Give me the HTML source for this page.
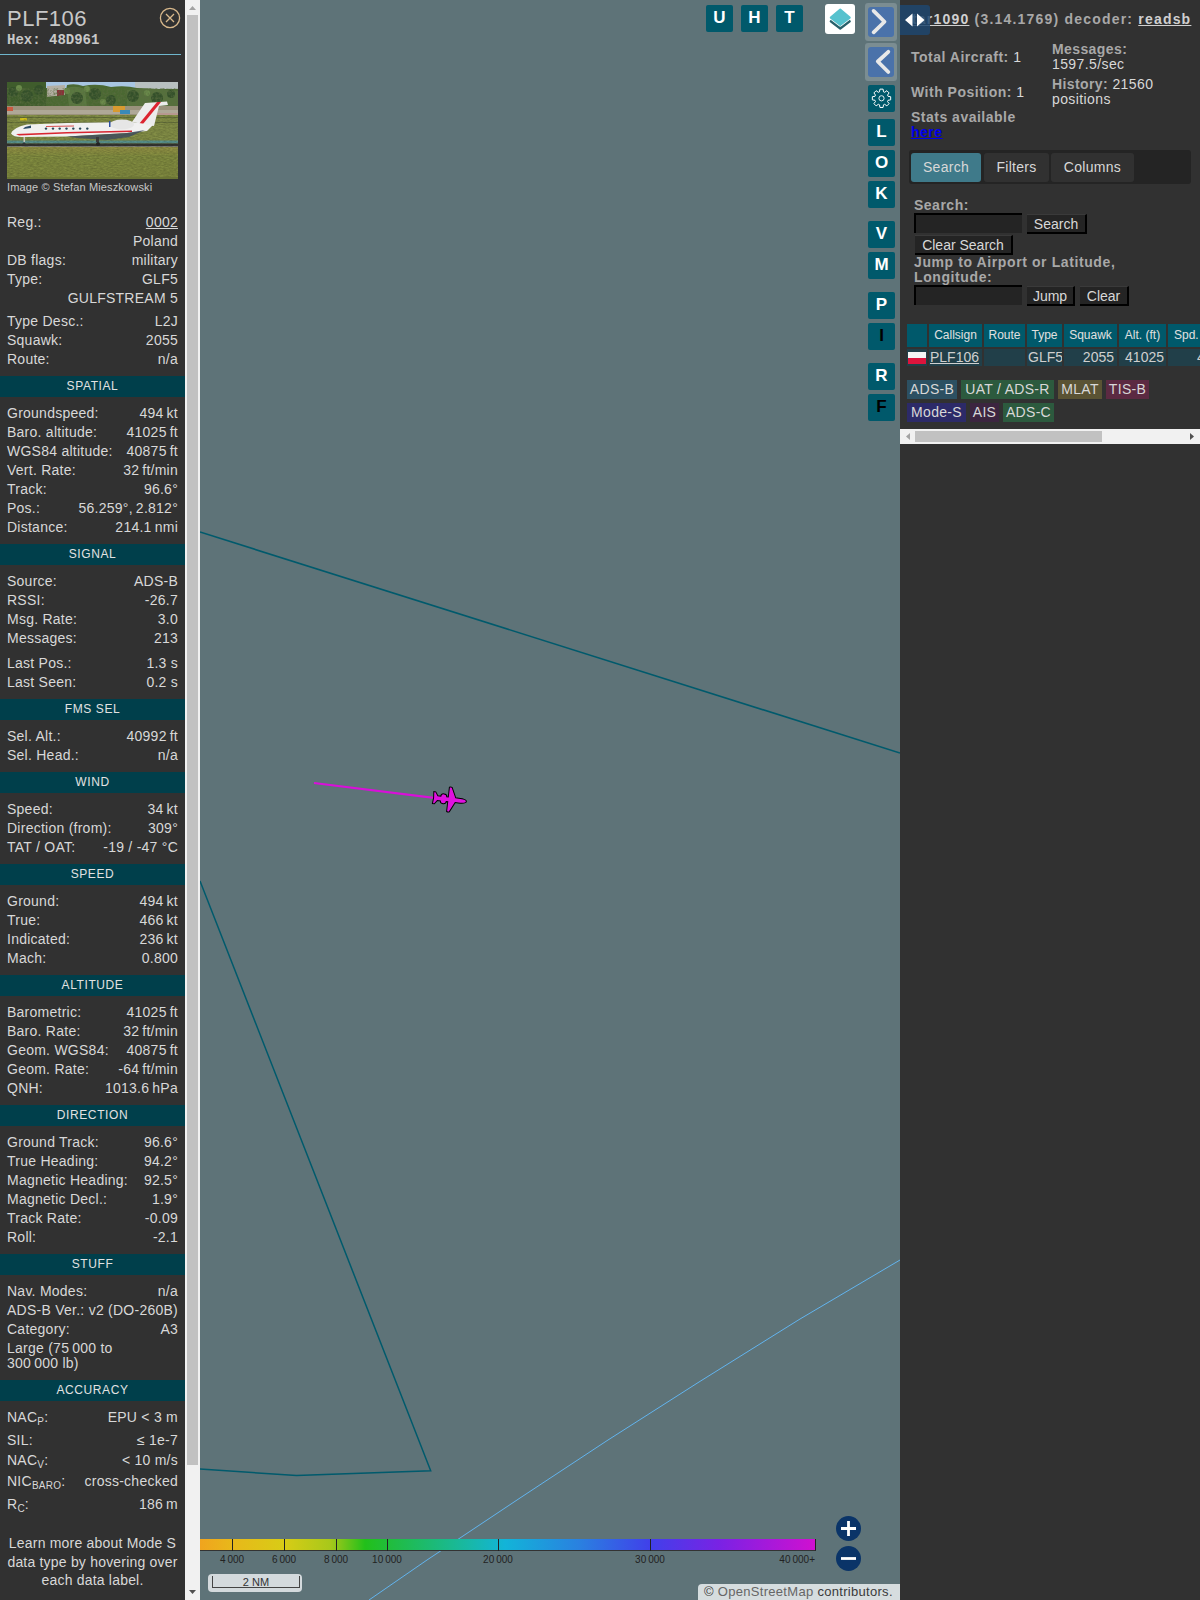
<!DOCTYPE html>
<html><head><meta charset="utf-8"><style>
html,body{margin:0;padding:0;width:1200px;height:1600px;overflow:hidden;background:#313131;font-family:"Liberation Sans", sans-serif;}
.abs{position:absolute}
#side{position:absolute;left:0;top:0;width:185px;height:1600px;background:#313131;color:#d8d8d8;overflow:hidden}
.r{position:absolute;left:7px;width:171px;height:17px;line-height:17px;font-size:14px;white-space:nowrap;letter-spacing:0.25px}
.r .l{position:absolute;left:0}
.r .v{position:absolute;right:0}
.r sub{font-size:10px;vertical-align:-3px;line-height:0}
.h{position:absolute;left:0;width:185px;height:21px;line-height:21px;background:#003f4b;color:#e2e2e2;text-align:center;font-size:12px;letter-spacing:0.6px}
.lm{position:absolute;left:0;width:185px;text-align:center;font-size:14px;letter-spacing:0.2px;height:17px;line-height:17px;white-space:nowrap}
#sbar{position:absolute;left:185px;top:0;width:15px;height:1600px;background:#f1f1f1}
#map{position:absolute;left:200px;top:0;width:700px;height:1600px;background:#5e7378;overflow:hidden}
.tick{position:absolute;top:1539px;width:1px;height:12px;background:#222}
.lab{position:absolute;top:1553.5px;width:60px;text-align:center;font-size:10px;line-height:12px;color:#222;white-space:nowrap}
.zb{position:absolute;width:25px;height:25px;border-radius:50%;background:#0a3468}
.mb{position:absolute;width:27px;height:27px;background:#00596b;border-radius:2px;color:#fff;font-weight:bold;font-size:17px;line-height:26px;text-align:center}
.rt{position:absolute;font-size:14px;line-height:17px;white-space:nowrap;color:#a8a8a8}
.rt .w{color:#d8d8d8}
.tab{position:absolute;top:153px;height:29px;line-height:29px;text-align:center;background:#313131;color:#d8d8d8;font-size:14px;border-radius:3px;letter-spacing:0.3px}
.inp{position:absolute;width:108px;height:20px;background:#242424;border-top:2px solid #000;border-left:2px solid #000;box-sizing:border-box}
.btn{position:absolute;height:20px;line-height:18px;background:#242424;color:#d8d8d8;font-size:14px;text-align:center;border-right:2px solid #000;border-bottom:2px solid #000;border-top:1px solid #3a3a3a;box-sizing:border-box;white-space:nowrap}
.th{position:absolute;top:324px;height:23px;line-height:23px;background:#00596b;color:#e0e0e0;font-size:12px;text-align:center;white-space:nowrap;overflow:hidden}
.td{position:absolute;top:349px;height:17px;line-height:17px;background:#213f49;color:#cfcfcf;font-size:14px;white-space:nowrap;overflow:hidden}
.src{position:absolute;height:19px;line-height:19px;text-align:center;color:#d8d8d8;font-size:14px;white-space:nowrap;letter-spacing:0.3px}
#right{position:absolute;left:900px;top:0;width:300px;height:1600px;background:#313131;color:#a8a8a8}
</style></head><body>
<div id="side">
<div class="abs" style="left:7px;top:5px;font-size:22px;letter-spacing:0.5px;color:#c8c8c8;line-height:28px">PLF106</div>
<div class="abs" style="left:7px;top:32px;font-size:14px;font-family:'Liberation Mono', monospace;font-weight:bold;color:#c8c8c8;line-height:16px">Hex: 48D961</div>
<svg class="abs" style="left:159px;top:7px" width="22" height="22" viewBox="0 0 22 22"><circle cx="11" cy="11" r="9.6" fill="none" stroke="#d9b98c" stroke-width="1.3"/><path d="M7 7L15 15M15 7L7 15" stroke="#d9b98c" stroke-width="1.3"/></svg>
<div class="abs" style="left:0;top:54px;width:181px;height:1px;background:#6fb6cc"></div>
<svg class="abs" style="left:7px;top:82px" width="171" height="97" viewBox="0 0 171 97">
<defs>
<linearGradient id="gr" x1="0" y1="0" x2="0" y2="1"><stop offset="0" stop-color="#a09e4a"/><stop offset="0.3" stop-color="#8c9845"/><stop offset="1" stop-color="#8a9444"/></linearGradient>
<filter id="tx" x="0" y="0" width="1" height="1"><feTurbulence type="fractalNoise" baseFrequency="0.3 0.9" numOctaves="2" seed="3"/><feColorMatrix values="0 0 0 0 0  0 0 0 0 0  0 0 0 0 0  0 0 0 0.3 0"/><feComposite in2="SourceGraphic" operator="in"/></filter>
<filter id="tr" x="0" y="0" width="1" height="1"><feTurbulence type="fractalNoise" baseFrequency="0.45" numOctaves="2" seed="7"/><feColorMatrix values="0 0 0 0 0.1  0 0 0 0 0.15  0 0 0 0 0.05  0 0 0 1.6 -0.6"/><feComposite in2="SourceGraphic" operator="in"/></filter>
</defs>
<rect width="171" height="97" fill="#8d9444"/>
<rect x="0" y="0" width="171" height="27" fill="#4a6632"/>
<rect x="39" y="0" width="132" height="6" fill="#a8c6e2"/>
<rect x="128" y="0" width="43" height="7" fill="#b8c0c0"/>
<path d="M0,0 L39,0 L39,27 L0,27Z" fill="#3f5c2c"/>
<path d="M40,4 L58,3 L58,14 L40,15Z" fill="#b4b0a4"/>
<rect x="50" y="8" width="7" height="7" fill="#8a3038"/>
<path d="M40,15 L58,13 L60,3 Q68,1 76,4 Q90,1 104,5 Q118,3 130,6 L171,8 L171,27 L40,27Z" fill="#4a6832"/>
<path d="M60,6 Q68,3 78,7 L80,24 L62,24Z" fill="#5a7840"/>
<path d="M120,8 Q140,5 171,9 L171,28 L120,28Z" fill="#55703c"/>
<g fill="#34502a"><circle cx="6" cy="10" r="5"/><circle cx="20" cy="14" r="6"/><circle cx="32" cy="8" r="5"/><circle cx="70" cy="16" r="6"/><circle cx="88" cy="12" r="6"/><circle cx="104" cy="18" r="5"/><circle cx="126" cy="14" r="6"/><circle cx="150" cy="16" r="6"/><circle cx="164" cy="12" r="4"/></g>
<g fill="#6a8a4a"><circle cx="12" cy="6" r="3"/><circle cx="60" cy="9" r="3"/><circle cx="80" cy="7" r="3"/><circle cx="140" cy="11" r="3"/><circle cx="96" cy="20" r="3"/></g>
<rect x="0" y="6" width="171" height="21" filter="url(#tr)" fill="#000"/>
<rect x="0" y="24" width="171" height="9" fill="#9a927c"/>
<rect x="0" y="28" width="171" height="4" fill="#b8b2a2" opacity="0.7"/>
<rect x="0" y="25" width="6" height="4" fill="#c85a40"/>
<rect x="106" y="24" width="12" height="6" fill="#d89a30"/>
<rect x="113" y="28" width="10" height="4" fill="#3a8ab8"/>
<rect x="150" y="31" width="21" height="4" fill="#b89890"/>
<rect x="0" y="33" width="171" height="25" fill="#8e9a4c"/>
<rect x="0" y="35" width="171" height="1" fill="#707c40"/>
<rect x="0" y="40" width="171" height="1" fill="#707c40"/>
<rect x="13" y="36" width="7" height="2.5" fill="#e8d820"/>
<rect x="0" y="58.5" width="171" height="3" fill="#62a09a"/>
<rect x="0" y="61.5" width="171" height="2.5" fill="#3a3a36"/>
<rect x="0" y="64" width="171" height="1" fill="#8a8a80"/>
<rect x="0" y="65" width="171" height="32" fill="url(#gr)"/>
<rect x="0" y="33" width="171" height="64" filter="url(#tx)" fill="#000"/>
<rect x="0" y="95" width="171" height="2" fill="#6a7434"/>
<path d="M125,40 L138,21 L160,19.5 L161,23 L152,24 L147,44 Z" fill="#ececec"/>
<path d="M150,20 L154,20 L136,42 L132,42 Z" fill="#dc2430"/>
<path d="M4,51.5 Q7,45 20,42.5 L60,41 L125,40 L146,43 L140,49 L120,51 L60,54.5 L15,55 Q6,55 4,51.5 Z" fill="#f0f0f0"/>
<path d="M9,52 L60,50 L125,48.5 L125,50 L60,51.5 L12,53.5 Z" fill="#d82530"/>
<path d="M39,44 L67,43.5 L67,44.5 L39,45Z" fill="#d85050"/>
<path d="M60,54.5 L120,51 L138,48 L122,55 L100,58 L70,56 Z" fill="#3c4a5e" opacity="0.8"/>
<ellipse cx="115" cy="42.5" rx="12" ry="5" fill="#e6e6e6"/>
<rect x="102" y="39" width="1.5" height="6" fill="#3050a0"/>
<path d="M18,45 L24,43.5 L24,46 L16,47Z" fill="#2a4a68"/>
<g fill="#2a4858"><circle cx="39" cy="46.6" r="1.2"/><circle cx="46" cy="46.6" r="1.2"/><circle cx="52.7" cy="46.6" r="1.2"/><circle cx="59.5" cy="46.6" r="1.2"/><circle cx="66.3" cy="46.6" r="1.2"/><circle cx="73.1" cy="46.6" r="1.2"/><circle cx="80.3" cy="46.6" r="1.2"/></g>
<rect x="89" y="55" width="3" height="5" fill="#3a3a3a"/><circle cx="91" cy="62" r="2" fill="#222"/>
<rect x="16.5" y="55" width="1.5" height="5" fill="#c8c8c0"/><circle cx="17" cy="62" r="1.6" fill="#333"/>
</svg>
<div class="abs" style="left:7px;top:180px;font-size:11px;letter-spacing:0.15px;color:#c8c8c8;line-height:14px">Image © Stefan Mieszkowski</div>
<div class="r" style="top:213.6px"><span class="l">Reg.:</span><span class="v"><u>0002</u></span></div><div class="r" style="top:232.6px"><span class="l"></span><span class="v">Poland</span></div><div class="r" style="top:251.6px"><span class="l">DB flags:</span><span class="v">military</span></div><div class="r" style="top:270.6px"><span class="l">Type:</span><span class="v">GLF5</span></div><div class="r" style="top:289.6px"><span class="l"></span><span class="v">GULFSTREAM 5</span></div><div class="r" style="top:312.6px"><span class="l">Type Desc.:</span><span class="v">L2J</span></div><div class="r" style="top:331.6px"><span class="l">Squawk:</span><span class="v">2055</span></div><div class="r" style="top:350.6px"><span class="l">Route:</span><span class="v">n/a</span></div><div class="r" style="top:404.6px"><span class="l">Groundspeed:</span><span class="v">494&#8201;kt</span></div><div class="r" style="top:423.6px"><span class="l">Baro. altitude:</span><span class="v">41025&#8201;ft</span></div><div class="r" style="top:442.6px"><span class="l">WGS84 altitude:</span><span class="v">40875&#8201;ft</span></div><div class="r" style="top:461.6px"><span class="l">Vert. Rate:</span><span class="v">32&#8201;ft/min</span></div><div class="r" style="top:480.6px"><span class="l">Track:</span><span class="v">96.6°</span></div><div class="r" style="top:499.6px"><span class="l">Pos.:</span><span class="v">56.259°,&#8201;2.812°</span></div><div class="r" style="top:518.6px"><span class="l">Distance:</span><span class="v">214.1&#8201;nmi</span></div><div class="r" style="top:572.6px"><span class="l">Source:</span><span class="v">ADS-B</span></div><div class="r" style="top:591.6px"><span class="l">RSSI:</span><span class="v">-26.7</span></div><div class="r" style="top:610.6px"><span class="l">Msg. Rate:</span><span class="v">3.0</span></div><div class="r" style="top:629.6px"><span class="l">Messages:</span><span class="v">213</span></div><div class="r" style="top:654.6px"><span class="l">Last Pos.:</span><span class="v">1.3 s</span></div><div class="r" style="top:673.6px"><span class="l">Last Seen:</span><span class="v">0.2 s</span></div><div class="r" style="top:727.6px"><span class="l">Sel. Alt.:</span><span class="v">40992&#8201;ft</span></div><div class="r" style="top:746.6px"><span class="l">Sel. Head.:</span><span class="v">n/a</span></div><div class="r" style="top:800.6px"><span class="l">Speed:</span><span class="v">34&#8201;kt</span></div><div class="r" style="top:819.6px"><span class="l">Direction (from):</span><span class="v">309°</span></div><div class="r" style="top:838.6px"><span class="l">TAT / OAT:</span><span class="v">-19 / -47 °C</span></div><div class="r" style="top:892.6px"><span class="l">Ground:</span><span class="v">494&#8201;kt</span></div><div class="r" style="top:911.6px"><span class="l">True:</span><span class="v">466&#8201;kt</span></div><div class="r" style="top:930.6px"><span class="l">Indicated:</span><span class="v">236&#8201;kt</span></div><div class="r" style="top:949.6px"><span class="l">Mach:</span><span class="v">0.800</span></div><div class="r" style="top:1003.6px"><span class="l">Barometric:</span><span class="v">41025&#8201;ft</span></div><div class="r" style="top:1022.6px"><span class="l">Baro. Rate:</span><span class="v">32&#8201;ft/min</span></div><div class="r" style="top:1041.6px"><span class="l">Geom. WGS84:</span><span class="v">40875&#8201;ft</span></div><div class="r" style="top:1060.6px"><span class="l">Geom. Rate:</span><span class="v">-64&#8201;ft/min</span></div><div class="r" style="top:1079.6px"><span class="l">QNH:</span><span class="v">1013.6&#8201;hPa</span></div><div class="r" style="top:1133.6px"><span class="l">Ground Track:</span><span class="v">96.6°</span></div><div class="r" style="top:1152.6px"><span class="l">True Heading:</span><span class="v">94.2°</span></div><div class="r" style="top:1171.6px"><span class="l">Magnetic Heading:</span><span class="v">92.5°</span></div><div class="r" style="top:1190.6px"><span class="l">Magnetic Decl.:</span><span class="v">1.9°</span></div><div class="r" style="top:1209.6px"><span class="l">Track Rate:</span><span class="v">-0.09</span></div><div class="r" style="top:1228.6px"><span class="l">Roll:</span><span class="v">-2.1</span></div><div class="r" style="top:1282.6px"><span class="l">Nav. Modes:</span><span class="v">n/a</span></div><div class="r" style="top:1301.6px"><span class="l">ADS-B Ver.:</span><span class="v">v2 (DO-260B)</span></div><div class="r" style="top:1320.6px"><span class="l">Category:</span><span class="v">A3</span></div><div class="r" style="top:1340.1px"><span class="l">Large (75&#8201;000 to</span><span class="v"></span></div><div class="r" style="top:1355.1px"><span class="l">300&#8201;000 lb)</span><span class="v"></span></div><div class="r" style="top:1408.6px"><span class="l">NAC<sub>P</sub>:</span><span class="v">EPU &lt; 3 m</span></div><div class="r" style="top:1431.6px"><span class="l">SIL:</span><span class="v">≤ 1e-7</span></div><div class="r" style="top:1451.6px"><span class="l">NAC<sub>V</sub>:</span><span class="v">&lt; 10 m/s</span></div><div class="r" style="top:1473.1px"><span class="l">NIC<sub>BARO</sub>:</span><span class="v">cross-checked</span></div><div class="r" style="top:1495.6px"><span class="l">R<sub>C</sub>:</span><span class="v">186&#8201;m</span></div>
<div class="h" style="top:376px">SPATIAL</div><div class="h" style="top:544px">SIGNAL</div><div class="h" style="top:699px">FMS SEL</div><div class="h" style="top:772px">WIND</div><div class="h" style="top:864px">SPEED</div><div class="h" style="top:975px">ALTITUDE</div><div class="h" style="top:1105px">DIRECTION</div><div class="h" style="top:1254px">STUFF</div><div class="h" style="top:1380px">ACCURACY</div>
<div class="lm" style="top:1534.6px">Learn more about Mode S</div><div class="lm" style="top:1553.6px">data type by hovering over</div><div class="lm" style="top:1571.6px">each data label.</div>
</div>
<div id="sbar"><div class="abs" style="left:2px;top:15px;width:11px;height:1450px;background:#c1c1c1"></div>
<svg class="abs" style="left:0;top:0" width="15" height="15"><path d="M4,10 L7.5,6 L11,10 Z" fill="#a3a3a3"/></svg>
<svg class="abs" style="left:0;top:1585px" width="15" height="15"><path d="M4,5 L7.5,9 L11,5 Z" fill="#505050"/></svg></div>
<div id="map">
<svg class="abs" style="left:0;top:0" width="700" height="1600" viewBox="200 0 700 1600">
<line x1="200" y1="532" x2="900" y2="753" stroke="#005a6c" stroke-width="1.6"/>
<polyline points="200,881 430.7,1470.7 296.5,1475.5 200,1469" fill="none" stroke="#005a6c" stroke-width="1.5" stroke-linejoin="miter"/>
<polyline points="900,1260 800,1319 699,1382 608,1440 520,1498 427,1560 369,1600" fill="none" stroke="#62b4ee" stroke-width="1"/>
<line x1="314" y1="783" x2="438" y2="798.3" stroke="#d90fd9" stroke-width="2.2"/>
<g transform="translate(449.5 799.5) rotate(96.6)">
<path d="M0,-17 C1.8,-17 2.4,-13 2.4,-9 L2.4,-6 L12.3,-1.2 Q13,0 12.3,1.5 L2.4,1.5 L2.4,3 C5.8,3 5.8,9 2.4,9 L2.4,12 L6,14.5 L6,16.5 L0,16 L-6,16.5 L-6,14.5 L-2.4,12 L-2.4,9 C-5.8,9 -5.8,3 -2.4,3 L-2.4,1.5 L-12.3,1.5 Q-13,0 -12.3,-1.2 L-2.4,-6 L-2.4,-9 C-2.4,-13 -1.8,-17 0,-17Z" fill="#e012e0" stroke="#000" stroke-width="1"/>
</g>
</svg>
<div class="mb" style="left:506px;top:5px">U</div>
<div class="mb" style="left:541px;top:5px">H</div>
<div class="mb" style="left:576px;top:5px">T</div>
<div class="abs" style="left:625px;top:4px;width:30px;height:30px;background:#fff;border-radius:3px">
<svg width="30" height="30" viewBox="0 0 30 30"><path d="M15.25,9.3 L24.75,17.3 L15.25,24.6 L5.75,17.3Z" fill="#27606b" stroke="#27606b" stroke-width="2.2" stroke-linejoin="round"/><path d="M15.25,5.6 L24.75,13.6 L15.25,20.9 L5.75,13.6Z" fill="#fff" stroke="#fff" stroke-width="3.6" stroke-linejoin="round"/><path d="M15.25,5.6 L24.75,13.6 L15.25,20.9 L5.75,13.6Z" fill="#56c2ce" stroke="#56c2ce" stroke-width="2" stroke-linejoin="round"/></svg>
</div>
<div class="abs" style="left:665px;top:3px;width:32px;height:38px;background:#7b8d92;border-radius:3px"></div>
<div class="abs" style="left:668px;top:7px;width:26px;height:30px;background:#4a72aa;border-radius:3px"><svg width="26" height="30" viewBox="0 0 26 30"><path d="M5.6,3.9 L16.5,14.75 L5.6,25.3" fill="none" stroke="#e8e8e8" stroke-width="3.8" stroke-linecap="round" stroke-linejoin="round"/></svg></div>
<div class="abs" style="left:665px;top:43px;width:32px;height:38px;background:#7b8d92;border-radius:3px"></div>
<div class="abs" style="left:668px;top:47px;width:26px;height:30px;background:#4a72aa;border-radius:3px"><svg width="26" height="30" viewBox="0 0 26 30"><path d="M20.3,4.8 L9.8,14.5 L20.3,25" fill="none" stroke="#e8e8e8" stroke-width="3.8" stroke-linecap="round" stroke-linejoin="round"/></svg></div>
<div class="mb" style="left:668px;top:85px"><svg width="27" height="27" viewBox="0 0 27 27"><path d="M20.00,11.29 L22.67,11.73 L22.67,14.87 L20.00,15.31 L19.51,16.47 L21.09,18.67 L18.87,20.89 L16.67,19.31 L15.51,19.80 L15.07,22.47 L11.93,22.47 L11.49,19.80 L10.33,19.31 L8.13,20.89 L5.91,18.67 L7.49,16.47 L7.00,15.31 L4.33,14.87 L4.33,11.73 L7.00,11.29 L7.49,10.13 L5.91,7.93 L8.13,5.71 L10.33,7.29 L11.49,6.80 L11.93,4.13 L15.07,4.13 L15.51,6.80 L16.67,7.29 L18.87,5.71 L21.09,7.93 L19.51,10.13 Z" stroke-linejoin="round" fill="none" stroke="#fff" stroke-width="1"/><circle cx="13.5" cy="13.3" r="2.6" fill="none" stroke="#fff" stroke-width="0.9"/></svg></div>
<div class="mb" style="left:668px;top:119px">L</div>
<div class="mb" style="left:668px;top:150px">O</div>
<div class="mb" style="left:668px;top:181px">K</div>
<div class="mb" style="left:668px;top:221px">V</div>
<div class="mb" style="left:668px;top:252px">M</div>
<div class="mb" style="left:668px;top:292px">P</div>
<div class="mb" style="left:668px;top:323px;color:#000">I</div>
<div class="mb" style="left:668px;top:363px">R</div>
<div class="mb" style="left:668px;top:394px;color:#000">F</div>
<div class="abs" style="left:0;top:1539px;width:615px;height:11px;border-bottom:1px solid #333;border-right:1px solid #222;background:linear-gradient(90deg,#f0a41e 0px,#e8b81a 32px,#d8cc16 84px,#a8c81a 130px,#22c01a 165px,#20bc44 195px,#18b8a8 270px,#12b4d8 305px,#2a80e0 380px,#4040ea 450px,#7a22e4 520px,#d010d0 615px)"></div>
<div class="tick" style="left:32px"></div><div class="tick" style="left:84px"></div><div class="tick" style="left:136px"></div><div class="tick" style="left:187px"></div><div class="tick" style="left:298px"></div><div class="tick" style="left:450px"></div>
<div class="lab" style="left:2px">4&#8201;000</div><div class="lab" style="left:54px">6&#8201;000</div><div class="lab" style="left:106px">8&#8201;000</div><div class="lab" style="left:157px">10&#8201;000</div><div class="lab" style="left:268px">20&#8201;000</div><div class="lab" style="left:420px">30&#8201;000</div><div class="lab" style="left:555px;width:60px;text-align:right">40&#8201;000+</div>
<div class="zb" style="left:636px;top:1516px"><svg width="25" height="25" viewBox="0 0 25 25"><path d="M12.5,5 V20 M5,12.5 H20" stroke="#fff" stroke-width="2.8"/></svg></div>
<div class="zb" style="left:636px;top:1546px"><svg width="25" height="25" viewBox="0 0 25 25"><path d="M5,12.5 H20" stroke="#fff" stroke-width="2.8"/></svg></div>
<div class="abs" style="left:8px;top:1574px;width:94px;height:18px;background:rgba(225,230,232,0.9);border-radius:4px"><div class="abs" style="left:4px;top:2px;width:86px;height:11px;border:1px solid #444;border-top:none;font-size:11px;line-height:12px;text-align:center;color:#333">2 NM</div></div>
<div class="abs" style="left:498px;top:1584px;width:202px;height:16px;background:rgba(225,230,232,0.92);border-radius:4px 0 0 0;font-size:13px;letter-spacing:0.3px;line-height:16px;color:#3a3a3a;white-space:nowrap;padding-left:6px;box-sizing:border-box">© <span style="color:#666">OpenStreetMap</span> contributors.</div>
</div>
<div id="right">
<div class="abs" style="left:12px;top:11px;font-size:14px;font-weight:bold;letter-spacing:1.2px;line-height:16px;white-space:nowrap;color:#a8a8a8"><u style="color:#d0d0d0">tar1090</u> (3.14.1769) decoder: <u style="color:#d0d0d0">readsb</u></div>
<div class="abs" style="left:0;top:5px;width:30px;height:30px;background:rgba(30,70,110,0.85);border-radius:0 3px 3px 0"><svg width="30" height="30" viewBox="0 0 30 30"><path d="M5,15 L12.5,8.5 L12.5,21.5Z M17,8.5 L24.5,15 L17,21.5Z" fill="#fff"/></svg></div>
<div class="rt" style="left:11px;top:49px;letter-spacing:0.5px"><b>Total Aircraft:</b> <span class="w">1</span></div>
<div class="rt" style="left:11px;top:84px;letter-spacing:0.5px"><b>With Position:</b> <span class="w">1</span></div>
<div class="rt" style="left:11px;top:110px;line-height:15px;letter-spacing:0.5px"><b>Stats available</b><br><b><u style="color:#0000ee">here</u></b></div>
<div class="rt" style="left:152px;top:42px;line-height:15px;letter-spacing:0.4px"><b>Messages:</b><br><span class="w">1597.5/sec</span></div>
<div class="rt" style="left:152px;top:77px;line-height:15px;letter-spacing:0.4px"><b>History:</b> <span class="w">21560</span><br><span class="w">positions</span></div>
<div class="abs" style="left:9px;top:150px;width:282px;height:34px;background:#242424;border-radius:3px"></div>
<div class="tab" style="left:11px;width:70px;background:#3f7a8a">Search</div>
<div class="tab" style="left:84px;width:65px">Filters</div>
<div class="tab" style="left:151px;width:83px">Columns</div>
<div class="rt" style="left:14px;top:197px;letter-spacing:0.5px"><b>Search:</b></div>
<div class="inp" style="left:14px;top:213px"></div>
<div class="btn" style="left:127px;top:214px;width:60px">Search</div>
<div class="btn" style="left:15px;top:235px;width:98px">Clear Search</div>
<div class="rt" style="left:14px;top:255px;line-height:15px;letter-spacing:0.6px"><b>Jump to Airport or Latitude,<br>Longitude:</b></div>
<div class="inp" style="left:14px;top:285px"></div>
<div class="btn" style="left:127px;top:286px;width:48px">Jump</div>
<div class="btn" style="left:180px;top:286px;width:49px">Clear</div>
<div class="th" style="left:7px;width:20px"></div>
<div class="th" style="left:29px;width:53px">Callsign</div>
<div class="th" style="left:84px;width:41px">Route</div>
<div class="th" style="left:127px;width:35px">Type</div>
<div class="th" style="left:164px;width:53px">Squawk</div>
<div class="th" style="left:219px;width:47px">Alt. (ft)</div>
<div class="th" style="left:268px;width:40px;text-align:left;padding-left:6px;box-sizing:border-box">Spd.</div>
<div class="td" style="left:7px;width:20px"><div class="abs" style="left:1px;top:3px;width:18px;height:6px;background:#f4f4f4"></div><div class="abs" style="left:1px;top:9px;width:18px;height:6px;background:#dc143c"></div></div>
<div class="td" style="left:29px;width:53px;text-align:left;padding-left:1px;box-sizing:border-box"><u>PLF106</u></div>
<div class="td" style="left:84px;width:41px"></div>
<div class="td" style="left:127px;width:35px;text-align:left;padding-left:1px;box-sizing:border-box">GLF5</div>
<div class="td" style="left:164px;width:53px;text-align:right;padding-right:3px;box-sizing:border-box">2055</div>
<div class="td" style="left:219px;width:47px;text-align:right;padding-right:2px;box-sizing:border-box">41025</div>
<div class="td" style="left:268px;width:40px"><span class="abs" style="left:29px;top:0">4</span></div>
<div class="src" style="left:7px;top:380px;width:50px;background:#2c5062">ADS-B</div>
<div class="src" style="left:61px;top:380px;width:93px;background:#2c5a3e">UAT / ADS-R</div>
<div class="src" style="left:158px;top:380px;width:44px;background:#5a5334">MLAT</div>
<div class="src" style="left:206px;top:380px;width:43px;background:#5c2a42">TIS-B</div>
<div class="src" style="left:7px;top:403px;width:59px;background:#2c2a68">Mode-S</div>
<div class="src" style="left:70px;top:403px;width:29px;background:#3c2540">AIS</div>
<div class="src" style="left:103px;top:403px;width:51px;background:#2c5a3e">ADS-C</div>
<div class="abs" style="left:0;top:429px;width:300px;height:15px;background:#f1f1f1"><div class="abs" style="left:15px;top:2px;width:187px;height:11px;background:#c1c1c1"></div>
<svg class="abs" style="left:0;top:0" width="15" height="15"><path d="M10,4 L6,7.5 L10,11Z" fill="#a3a3a3"/></svg>
<svg class="abs" style="left:285px;top:0" width="15" height="15"><path d="M5,4 L9,7.5 L5,11Z" fill="#505050"/></svg></div>
</div>
</body></html>
